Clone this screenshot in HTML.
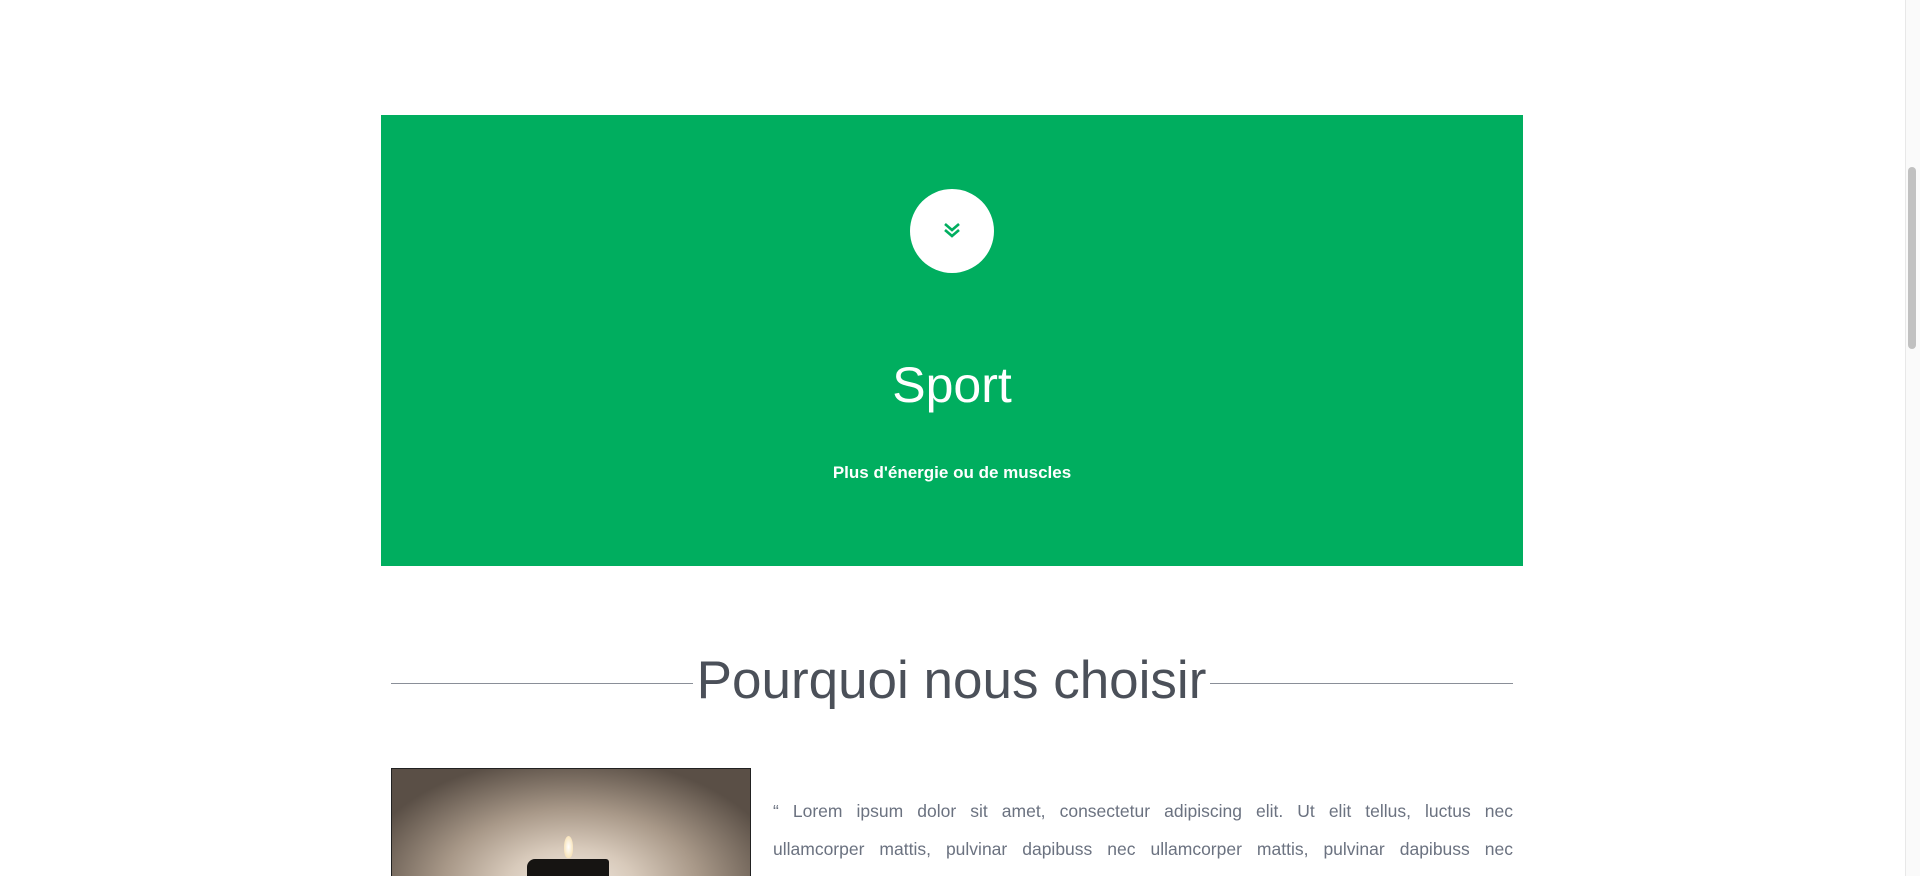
<!DOCTYPE html>
<html><head><meta charset="utf-8"><style>
html,body{margin:0;padding:0;background:#fff;width:1920px;height:876px;overflow:hidden;font-family:"Liberation Sans",sans-serif}
.wrap{position:relative;width:1920px;height:876px;overflow:hidden}
.green{position:absolute;left:381px;top:115px;width:1142px;height:451px;background:#00ae5f}
.circle{position:absolute;left:910px;top:189px;width:84px;height:84px;border-radius:50%;background:#fff}
.sport{position:absolute;left:381px;width:1142px;top:355px;text-align:center;color:#fff;font-size:50px;line-height:60px}
.sub{position:absolute;left:381px;width:1142px;top:462px;text-align:center;color:#fff;font-size:17px;font-weight:bold;line-height:22px}
.line{position:absolute;top:683px;height:1px;background:#8a8f98}
.h2{position:absolute;left:693px;width:517px;top:650px;text-align:center;color:#4b5059;font-size:53px;line-height:62px;white-space:nowrap}
.img{position:absolute;left:391px;top:768px;width:360px;height:120px;border:1px solid #222;box-sizing:border-box;background:radial-gradient(ellipse 60% 110% at 50% 100%,#f3ebe2 0%,#d8cabb 30%,#a89888 60%,#5a4f46 100%)}
.candle{position:absolute;left:135px;top:90px;width:82px;height:40px;background:#161412;border-radius:8px 3px 0 0}
.flame{position:absolute;left:172px;top:67px;width:9px;height:22px;border-radius:50% 50% 40% 40%;background:radial-gradient(#fff,#f5d9a0)}
.txt{position:absolute;left:773px;top:792px;width:740px;color:#6b7280;font-size:17.5px;line-height:38px;text-align:justify;word-spacing:2px}
.sb{position:absolute;left:1905px;top:0;width:15px;height:876px;background:#fafafa;border-left:1px solid #e8e8e8}
.thumb{position:absolute;left:1908px;top:167px;width:8px;height:182px;border-radius:4px;background:#c1c1c1}
</style></head><body><div class="wrap">
<div class="green"></div>
<div class="circle"><svg width="84" height="84" viewBox="0 0 84 84"><path d="M35 35l7 6 7-6M35 41l7 6 7-6" fill="none" stroke="#00ae5f" stroke-width="2.6"/></svg></div>
<div class="sport">Sport</div>
<div class="sub">Plus d'énergie ou de muscles</div>
<div class="line" style="left:391px;width:302px"></div>
<div class="line" style="left:1210px;width:303px"></div>
<div class="h2">Pourquoi nous choisir</div>
<div class="img"><div class="flame"></div><div class="candle"></div></div>
<div class="txt">“ Lorem ipsum dolor sit amet, consectetur adipiscing elit. Ut elit tellus, luctus nec ullamcorper mattis, pulvinar dapibuss nec ullamcorper mattis, pulvinar dapibuss nec ullamcorper mattis, pulvinar dapibus leo.</div>
<div class="sb"></div><div class="thumb"></div>
</div></body></html>
